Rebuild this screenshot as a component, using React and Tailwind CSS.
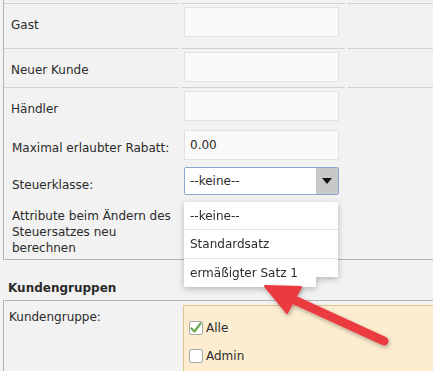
import React from 'react'

const rows = [
  { label: 'Gast', h: 'h-[45px]', value: '' },
  { label: 'Neuer Kunde', h: 'h-[39px]', value: '' },
  { label: 'Händler', h: 'h-[39px]', value: '' },
]

function Check({ checked }) {
  return (
    <span className="w-[14px] h-[14px] bg-white border border-[#a9a9a9] rounded-[2px] flex items-center justify-center shrink-0">
      {checked && (
        <svg width="12" height="12" viewBox="0 0 12 12">
          <path d="M1.5 6.5 L4.5 9.5 L10.5 1.5" fill="none" stroke="#6aa84f" strokeWidth="2.2" strokeLinecap="round" strokeLinejoin="round" />
        </svg>
      )}
    </span>
  )
}

export default function App() {
  return (
    <div className="relative w-[433px] h-[371px] overflow-hidden bg-[#f2f2f2] text-[12px] leading-[16px] text-[#2b2b2b] font-['DejaVu_Sans',sans-serif]">
      {/* Settings panel */}
      <div className="ml-[3px] h-[260px] pt-[3px] border-l border-b border-[#b4b4b4]">
        {rows.map((r) => (
          <div key={r.label} className={`flex gap-x-[3px] ${r.h}`}>
            <div className="w-[174px] border-t border-[#d2d2d2] pl-[7px] pt-[13px]">{r.label}</div>
            <div className="w-[164px] border-t border-[#d2d2d2] pl-[3px] pt-[3px]">
              <div className="w-[155px] h-[30px] bg-[#fafafa] border border-[#e2e2e2]" />
            </div>
            <div className="flex-1 border-t border-[#d2d2d2]" />
          </div>
        ))}

        <div className="flex h-[37px] pt-[1px]">
          <div className="w-[177px] pl-[8px] pt-[13px]">Maximal erlaubter Rabatt:</div>
          <div className="pl-[3px] pt-[3px]">
            <div className="w-[155px] h-[30px] bg-[#fafafa] border border-[#e2e2e2] pl-[5px] flex items-center">0.00</div>
          </div>
        </div>

        <div className="flex h-[39px]">
          <div className="w-[177px] pl-[8px] pt-[14px]">Steuerklasse:</div>
          <div className="pl-[3px] pt-[4px]">
            <div className="w-[155px] h-[28px] bg-white border border-[#8aa6cf] rounded-[2px] flex">
              <div className="flex-1 pl-[5px] flex items-center">--keine--</div>
              <div className="w-[22px] bg-[#c8c8c8] flex items-center justify-center">
                <svg width="10" height="6" viewBox="0 0 10 6">
                  <path d="M0 0 H10 L5 6 Z" fill="#111" />
                </svg>
              </div>
            </div>
          </div>
        </div>

        <div className="w-[170px] pl-[8px] pt-[6px]">Attribute beim Ändern des Steuersatzes neu berechnen</div>
      </div>

      <div className="pl-[8px] pt-[20px] h-[40px] font-bold">Kundengruppen</div>

      {/* Customer group panel */}
      <div className="ml-[3px] border-l border-t border-[#b4b4b4] flex">
        <div className="w-[179px] pl-[5px] pt-[8px]">Kundengruppe:</div>
        <div className="flex-1 mt-[4px] h-[80px] bg-[#fdedd0] border-l border-t border-[#e3c48f] pl-[5px] pt-[14px] flex flex-col gap-[12px]">
          <div className="flex items-center gap-[3px]">
            <Check checked />
            <span>Alle</span>
          </div>
          <div className="flex items-center gap-[3px]">
            <Check />
            <span>Admin</span>
          </div>
        </div>
      </div>

      {/* Open select list */}
      <div className="absolute left-[184px] top-[202px] drop-shadow-[0_2px_3px_rgba(0,0,0,0.25)]">
        <div className="w-[154px] h-[85px] bg-white [clip-path:polygon(0_0,100%_0,100%_75px,132px_75px,132px_100%,0_100%)]">
          <div className="h-[28px] border-b border-[#e2e2e2] pl-[6px] flex items-center">--keine--</div>
          <div className="h-[29px] border-b border-[#e2e2e2] pl-[6px] flex items-center">Standardsatz</div>
          <div className="h-[27px] pl-[6px] flex items-center">ermäßigter Satz 1</div>
        </div>
      </div>

      {/* Red pointer arrow */}
      <svg className="absolute left-0 top-0" width="433" height="371" viewBox="0 0 433 371">
        <defs>
          <filter id="sh" x="-20%" y="-20%" width="140%" height="140%">
            <feDropShadow dx="1" dy="2" stdDeviation="2" floodColor="#000" floodOpacity="0.3" />
          </filter>
        </defs>
        <g filter="url(#sh)" fill="#ea3a3f" stroke="#ea3a3f">
          <line x1="384" y1="341" x2="290" y2="298" strokeWidth="9" strokeLinecap="round" />
          <polygon points="265,286 301,287 287,313" strokeWidth="2" strokeLinejoin="round" />
        </g>
      </svg>
    </div>
  )
}
